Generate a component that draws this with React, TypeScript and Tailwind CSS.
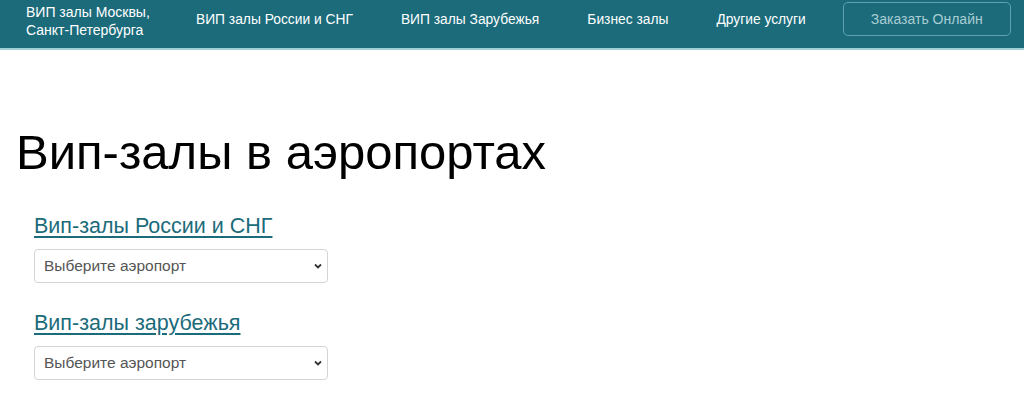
import React from "react"

const navLinks = ["ВИП залы России и СНГ", "ВИП залы Зарубежья", "Бизнес залы", "Другие услуги"]

const AirportSelect = () => (
  <div className="relative w-[294px]">
    <select className="h-[34px] w-full appearance-none rounded border border-[#d4d4d4] bg-white pl-[9px] pr-8 text-[15.5px] text-[#555] outline-none">
      <option>Выберите аэропорт</option>
    </select>
    <svg
      className="pointer-events-none absolute right-[5px] top-[13px] h-[8px] w-[10px]"
      viewBox="0 0 10 8"
      fill="none"
      stroke="#333"
      strokeWidth="1.8"
    >
      <path d="M2 2.5 L5 5.5 L8 2.5" />
    </svg>
  </div>
)

export default function App() {
  return (
    <div className="min-h-[397px] bg-white font-['Liberation_Sans',Arial,sans-serif]">
      <header className="flex h-[50px] items-start border-b-2 border-[#9fcfd6] bg-[#1b6b7b] text-[14px] text-white">
        <a className="ml-[26px] mt-[3px] w-[140px] leading-[18px]">
          ВИП залы Москвы,
          <br />
          Санкт-Петербурга
        </a>
        <nav className="ml-[30px] mt-[11px] flex gap-[48px] text-[13.8px] leading-[18px]">
          {navLinks.map((l) => (
            <a key={l}>{l}</a>
          ))}
        </nav>
        <button className="ml-[37px] mt-[2px] h-[34px] w-[168px] rounded-[5px] border border-[#5ea3ae] text-[14px] text-[#a9cdd3]">
          Заказать Онлайн
        </button>
      </header>

      <main className="px-4">
        <h1 className="mt-[74px] text-[49px] leading-[56px] text-black">Вип-залы в аэропортах</h1>
        <section className="mt-[34px] pl-[18px]">
          <a className="block text-[21.5px] leading-[24px] text-[#1b6b7b] underline underline-offset-[3px]">Вип-залы России и СНГ</a>
          <div className="mt-[11px]">
            <AirportSelect />
          </div>
          <a className="mt-[28px] block text-[21.5px] leading-[24px] text-[#1b6b7b] underline underline-offset-[3px]">Вип-залы зарубежья</a>
          <div className="mt-[11px]">
            <AirportSelect />
          </div>
        </section>
      </main>
    </div>
  )
}
